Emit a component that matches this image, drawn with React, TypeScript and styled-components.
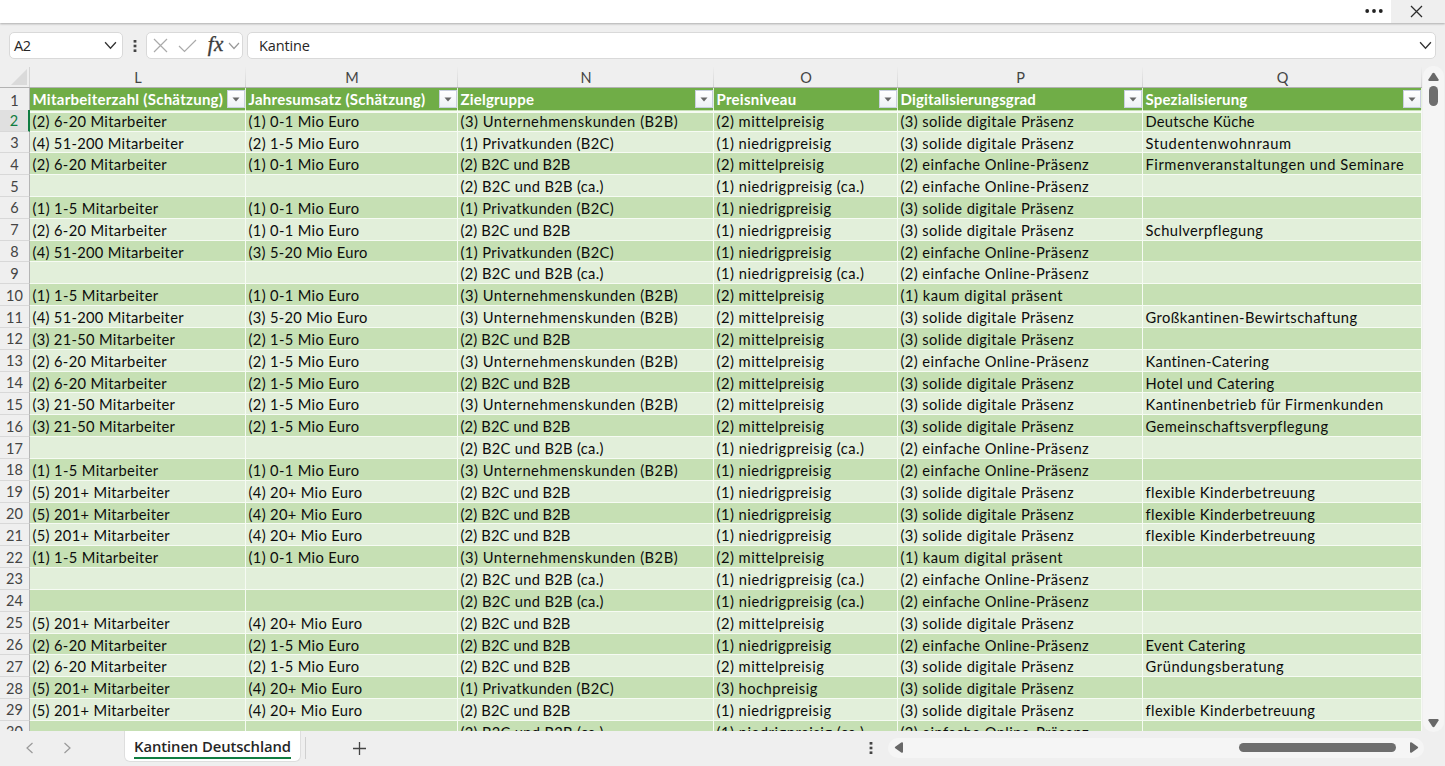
import React from "react";
import styled, { createGlobalStyle } from "styled-components";

const GlobalStyle = createGlobalStyle`
  * { box-sizing: border-box; }
  body { margin: 0; background: #efefef; overflow: hidden; }
`;

const uiFont = '"Open Sans", "Noto Sans", sans-serif';
const cellFont = 'Lato, "Open Sans", sans-serif';
const columnTemplate = "30px 216px 212px 256px 184px 245px 279px";

const Window = styled.div`
  width: 1445px;
  height: 766px;
  display: flex;
  flex-direction: column;
  background: #efefef;
  font-family: ${uiFont};
  color: #262626;
  overflow: hidden;
`;

const TitleBar = styled.div`
  height: 23px;
  flex: none;
  display: flex;
  justify-content: flex-end;
  background: #fff;
  box-shadow: 0 1px 2px rgba(0, 0, 0, 0.28);
`;

const TitleButton = styled.div<{ $width: number; $shaded?: boolean }>`
  width: ${(p) => p.$width}px;
  display: flex;
  align-items: center;
  justify-content: center;
  padding: ${(p) => (p.$shaded ? "0 3px 1px 0" : "0 0 2px")};
  background: ${(p) => (p.$shaded ? "#efefef" : "#fff")};
`;

const FormulaBar = styled.div`
  height: 44px;
  flex: none;
  display: flex;
  align-items: flex-start;
  padding: 9px 9px 0;
`;

const Field = styled.div<{ $width?: number; $pad?: string }>`
  height: 27px;
  ${(p) => (p.$width ? `width: ${p.$width}px; flex: none;` : "flex: 1;")}
  display: flex;
  align-items: center;
  justify-content: space-between;
  padding: ${(p) => p.$pad ?? "0 5px 0 4px"};
  background: #fff;
  border: 1px solid #d9d9d9;
  border-radius: 5px;
  font-size: 14.5px;
  line-height: 20px;
`;

const FieldText = styled.span<{ $spacing: number }>`
  letter-spacing: ${(p) => p.$spacing}px;
`;

const FieldDivider = styled.div<{ $width: number }>`
  width: ${(p) => p.$width}px;
  height: 27px;
  flex: none;
  display: flex;
  align-items: center;
  justify-content: center;
`;

const CheckMark = styled.svg`
  margin-left: 9px;
`;

const FxLabel = styled.span`
  font: italic 400 21px/20px "Liberation Serif", serif;
  letter-spacing: 0.3px;
  -webkit-text-stroke: 0.35px #3c3c3c;
  color: #3c3c3c;
  padding: 0 3px 4px 9px;
`;

const Workspace = styled.div`
  height: 664px;
  flex: none;
  display: flex;
`;

const Sheet = styled.div`
  width: 1422px;
  flex: none;
  overflow: hidden;
`;

const ColumnHeads = styled.div`
  height: 21px;
  display: grid;
  grid-template-columns: ${columnTemplate};
  border-bottom: 1px solid #b3b3b3;
`;

const ColumnHead = styled.div`
  display: flex;
  justify-content: center;
  align-items: center;
  padding: 1px 0 0 1px;
  font-family: ${cellFont};
  font-size: 14.5px;
  color: #444;
  border-right: 1px solid;
  border-image: linear-gradient(#efefef, #d2d2d2) 1;
`;

const SelectCorner = styled.div`
  display: flex;
  justify-content: flex-end;
  align-items: flex-end;
  padding: 0 2px 2px 0;
  border-right: 1px solid #d5d5d5;
`;

const Row = styled.div<{ $band: boolean }>`
  height: 21.83px;
  display: grid;
  grid-template-columns: ${columnTemplate};
  background: ${(p) => (p.$band ? "#c6e0b4" : "#e2efda")};
`;

const HeaderRow = styled(Row)`
  height: 21.7px;
  background: #70ad47;
`;

const RowNumber = styled.div<{ $active?: boolean; $top?: number }>`
  display: flex;
  align-items: center;
  justify-content: center;
  padding-top: ${(p) => p.$top ?? 1}px;
  background: ${(p) => (p.$active ? "#e0e0e0" : "#efefef")};
  border-right: ${(p) => (p.$active ? "2px solid #107c41" : "1px solid #b5b5b5")};
  border-bottom: 1px solid #d8d8d8;
  font-family: ${cellFont};
  font-size: 14.5px;
  color: ${(p) => (p.$active ? "#107c41" : "#444")};
`;

const Cell = styled.div<{ $spacing: number }>`
  padding-left: 2.5px;
  border-right: 1px solid #f6fbf3;
  border-bottom: 1px solid #f6fbf3;
  font-family: ${cellFont};
  font-size: 14.7px;
  line-height: 23px;
  letter-spacing: ${(p) => p.$spacing}px;
  white-space: pre;
  color: #0c0c0c;
  overflow: hidden;
`;

const HeaderCell = styled.div<{ $spacing: number }>`
  display: flex;
  justify-content: space-between;
  padding-left: 2.5px;
  border-right: 1px solid #e4f1dc;
  border-bottom: 2px solid #f6fbf3;
  font-family: ${cellFont};
  font-size: 15px;
  font-weight: 700;
  line-height: 23px;
  letter-spacing: ${(p) => p.$spacing}px;
  white-space: nowrap;
  color: #fff;
`;

const FilterButton = styled.div`
  width: 18px;
  height: 18px;
  flex: none;
  margin-top: 2px;
  display: flex;
  align-items: center;
  justify-content: center;
  background: linear-gradient(#fff, #eef1f7);
  border: 1px solid #c9cfdf;
`;

const VerticalBar = styled.div`
  width: 21px;
  height: 666px;
  margin: -1px 0 0 1px;
  display: flex;
  flex-direction: column;
  align-items: center;
  padding: 6px 0 4px;
  border-radius: 10px;
  background: #f5f5f5;
`;

const VerticalThumb = styled.div`
  width: 9px;
  height: 20px;
  margin: 5px 0 auto;
  border-radius: 5px;
  background: #6e6e6e;
`;

const Footer = styled.div`
  flex: 1;
  display: flex;
  align-items: flex-start;
`;

const FooterIcon = styled.div<{ $width: number }>`
  width: ${(p) => p.$width}px;
  height: 34px;
  flex: none;
  display: flex;
  align-items: center;
  justify-content: center;
`;

const SheetTab = styled.div`
  width: 177px;
  height: 31px;
  flex: none;
  display: flex;
  justify-content: center;
  background: #fff;
  border: 1px solid #dedede;
  border-top: 0;
  border-radius: 0 0 6px 6px;
`;

const SheetName = styled.span`
  height: 28px;
  border-bottom: 2px solid #107c41;
  font-size: 14.8px;
  font-weight: 600;
  line-height: 31px;
  letter-spacing: -0.08px;
  white-space: nowrap;
`;

const TabDivider = styled.div`
  width: 1px;
  height: 22px;
  margin: 6px 0 0 4px;
  background: #d0d0d0;
`;

const FooterSpace = styled.div`
  flex: 1;
`;

const HorizontalBar = styled.div`
  width: 536px;
  height: 20px;
  flex: none;
  display: flex;
  align-items: center;
  margin: 7px 21px 0 0;
  padding: 0 5px 1px 6px;
  border-radius: 10px;
  background: #f5f5f5;
`;

const HorizontalThumb = styled.div`
  width: 157px;
  height: 9px;
  margin: 0 14px 0 auto;
  border-radius: 5px;
  background: #6e6e6e;
`;

type ChevronProps = { dir: "down" | "left" | "right"; size: number; color: string };

const chevronPoints = { down: "1,3 6,8.5 11,3", left: "8.5,1 3,6 8.5,11", right: "3.5,1 9,6 3.5,11" };

const Chevron = ({ dir, size, color }: ChevronProps) => (
  <svg width={size} height={size} viewBox="0 0 12 12" fill="none" stroke={color} strokeWidth={1.2}>
    <polyline points={chevronPoints[dir]} />
  </svg>
);

const Dots = ({ vertical }: { vertical?: boolean }) =>
  vertical ? (
    <svg width="4" height="14" viewBox="0 0 4 14" fill="#444">
      <rect x="0.6" y="1" width="2.8" height="2.6" />
      <rect x="0.6" y="5.7" width="2.8" height="2.6" />
      <rect x="0.6" y="10.4" width="2.8" height="2.6" />
    </svg>
  ) : (
    <svg width="20" height="6" viewBox="0 0 20 6" fill="#222">
      <circle cx="3.2" cy="3" r="1.9" />
      <circle cx="10" cy="3" r="1.9" />
      <circle cx="16.8" cy="3" r="1.9" />
    </svg>
  );

const arrowPaths = {
  up: "M4.3 1.6Q5.5 0 6.7 1.6L10.6 7.4Q11 9 9.6 9H1.4Q0 9 0.4 7.4Z",
  down: "M4.3 7.4Q5.5 9 6.7 7.4L10.6 1.6Q11 0 9.6 0H1.4Q0 0 0.4 1.6Z",
  left: "M1.6 4.4Q0 5.5 1.6 6.6L7.2 10.6Q9 11.2 9 9.8V1.2Q9 -0.2 7.2 0.4Z",
  right: "M7.4 4.4Q9 5.5 7.4 6.6L1.8 10.6Q0 11.2 0 9.8V1.2Q0 -0.2 1.8 0.4Z",
};

const ScrollArrow = ({ dir }: { dir: keyof typeof arrowPaths }) => {
  const upright = dir === "up" || dir === "down";
  return (
    <svg width={upright ? 11 : 9} height={upright ? 9 : 11} fill="#686868">
      <path d={arrowPaths[dir]} />
    </svg>
  );
};

type Label = { text: string; spacing: number };
const label = (text: string, spacing = 0.3): Label => ({ text, spacing });

const columns = [
  { letter: "L", ...label("Mitarbeiterzahl (Schätzung)", 0.27) },
  { letter: "M", ...label("Jahresumsatz (Schätzung)", 0.27) },
  { letter: "N", ...label("Zielgruppe", 0.2) },
  { letter: "O", ...label("Preisniveau", 0.26) },
  { letter: "P", ...label("Digitalisierungsgrad", 0.15) },
  { letter: "Q", ...label("Spezialisierung", 0.17) },
];

const blank = label("");

const staff: Record<string, Label> = {
  "1": label("(1) 1-5 Mitarbeiter", 0.36),
  "2": label("(2) 6-20 Mitarbeiter", 0.34),
  "3": label("(3) 21-50 Mitarbeiter", 0.31),
  "4": label("(4) 51-200 Mitarbeiter", 0.3),
  "5": label("(5) 201+ Mitarbeiter", 0.34),
};
const revenue: Record<string, Label> = {
  "1": label("(1) 0-1 Mio Euro", 0.35),
  "2": label("(2) 1-5 Mio Euro", 0.35),
  "3": label("(3) 5-20 Mio Euro", 0.32),
  "4": label("(4) 20+ Mio Euro", 0.35),
};
const audience: Record<string, Label> = {
  "1": label("(1) Privatkunden (B2C)", 0.39),
  "2": label("(2) B2C und B2B", 0.16),
  "2c": label("(2) B2C und B2B (ca.)", 0.32),
  "3": label("(3) Unternehmenskunden (B2B)", 0.53),
};
const price: Record<string, Label> = {
  "1": label("(1) niedrigpreisig", 0.48),
  "1c": label("(1) niedrigpreisig (ca.)", 0.53),
  "2": label("(2) mittelpreisig", 0.49),
  "3": label("(3) hochpreisig", 0.49),
};
const digital: Record<string, Label> = {
  "1": label("(1) kaum digital präsent", 0.53),
  "2": label("(2) einfache Online-Präsenz", 0.43),
  "3": label("(3) solide digitale Präsenz", 0.42),
};
const specialities: Record<string, Label> = {
  kitchen: label("Deutsche Küche", 0.25),
  student: label("Studentenwohnraum", 0.65),
  events: label("Firmenveranstaltungen und Seminare", 0.55),
  school: label("Schulverpflegung", 0.4),
  large: label("Großkantinen-Bewirtschaftung", 0.44),
  canteen: label("Kantinen-Catering", 0.32),
  hotel: label("Hotel und Catering", 0.37),
  corporate: label("Kantinenbetrieb für Firmenkunden", 0.47),
  community: label("Gemeinschaftsverpflegung", 0.46),
  childcare: label("flexible Kinderbetreuung", 0.44),
  event: label("Event Catering", 0.34),
  startup: label("Gründungsberatung", 0.6),
};

const records: string[][] = [
  ["2", "1", "3", "2", "3", "kitchen"],
  ["4", "2", "1", "1", "3", "student"],
  ["2", "1", "2", "2", "2", "events"],
  ["", "", "2c", "1c", "2", ""],
  ["1", "1", "1", "1", "3", ""],
  ["2", "1", "2", "1", "3", "school"],
  ["4", "3", "1", "1", "2", ""],
  ["", "", "2c", "1c", "2", ""],
  ["1", "1", "3", "2", "1", ""],
  ["4", "3", "3", "2", "3", "large"],
  ["3", "2", "2", "2", "3", ""],
  ["2", "2", "3", "2", "2", "canteen"],
  ["2", "2", "2", "2", "3", "hotel"],
  ["3", "2", "3", "2", "3", "corporate"],
  ["3", "2", "2", "2", "3", "community"],
  ["", "", "2c", "1c", "2", ""],
  ["1", "1", "3", "1", "2", ""],
  ["5", "4", "2", "1", "3", "childcare"],
  ["5", "4", "2", "1", "3", "childcare"],
  ["5", "4", "2", "1", "3", "childcare"],
  ["1", "1", "3", "2", "1", ""],
  ["", "", "2c", "1c", "2", ""],
  ["", "", "2c", "1c", "2", ""],
  ["5", "4", "2", "2", "3", ""],
  ["2", "2", "2", "1", "2", "event"],
  ["2", "2", "2", "2", "3", "startup"],
  ["5", "4", "1", "3", "3", ""],
  ["5", "4", "2", "1", "3", "childcare"],
  ["", "", "2c", "1c", "2", ""],
];

const lookups = [staff, revenue, audience, price, digital, specialities];

export default function App() {
  return (
    <>
      <GlobalStyle />
      <Window>
        <TitleBar>
          <TitleButton $width={34}><Dots /></TitleButton>
          <TitleButton $width={54} $shaded>
            <svg width="13" height="13" viewBox="0 0 13 13" stroke="#2b2b2b" strokeWidth="1.25">
              <path d="M1 1L12 12M12 1L1 12" />
            </svg>
          </TitleButton>
        </TitleBar>

        <FormulaBar>
          <Field $width={114}>
            <FieldText $spacing={-0.3}>A2</FieldText>
            <Chevron dir="down" size={13} color="#333" />
          </Field>
          <FieldDivider $width={23}><Dots vertical /></FieldDivider>
          <Field $width={97} $pad="0 2px 0 6px">
            <svg width="15" height="15" viewBox="0 0 15 15" stroke="#aaa" strokeWidth="1.2">
              <path d="M1 1L14 14M14 1L1 14" />
            </svg>
            <CheckMark width="19" height="14" viewBox="0 0 19 14" fill="none" stroke="#aaa" strokeWidth="1.2">
              <path d="M1 7L6.5 12.5L18 1" />
            </CheckMark>
            <FxLabel>fx</FxLabel>
            <Chevron dir="down" size={12} color="#999" />
          </Field>
          <FieldDivider $width={4} />
          <Field $pad="0 3px 0 11px">
            <FieldText $spacing={-0.15}>Kantine</FieldText>
            <Chevron dir="down" size={13} color="#333" />
          </Field>
        </FormulaBar>

        <Workspace>
          <Sheet>
            <ColumnHeads>
              <SelectCorner>
                <svg width="16" height="16"><path d="M16 0V16H0Z" fill="#dadada" /></svg>
              </SelectCorner>
              {columns.map((c) => <ColumnHead key={c.letter}>{c.letter}</ColumnHead>)}
            </ColumnHeads>
            <HeaderRow $band={false}>
              <RowNumber $top={0}>1</RowNumber>
              {columns.map((c) => (
                <HeaderCell key={c.letter} $spacing={c.spacing}>
                  {c.text}
                  <FilterButton>
                    <svg width="8" height="5"><path d="M0.5 0.5H7.5L4 4.5Z" fill="#666" /></svg>
                  </FilterButton>
                </HeaderCell>
              ))}
            </HeaderRow>
            {records.map((record, index) => (
              <Row key={index} $band={index % 2 === 0}>
                <RowNumber $active={index === 0}>{index + 2}</RowNumber>
                {record.map((key, i) => {
                  const { text, spacing } = lookups[i][key] ?? blank;
                  return <Cell key={i} $spacing={spacing}>{text}</Cell>;
                })}
              </Row>
            ))}
          </Sheet>
          <VerticalBar>
            <ScrollArrow dir="up" />
            <VerticalThumb />
            <ScrollArrow dir="down" />
          </VerticalBar>
        </Workspace>

        <Footer>
          <FooterIcon $width={60}><Chevron dir="left" size={12} color="#999" /></FooterIcon>
          <FooterIcon $width={14}><Chevron dir="right" size={12} color="#999" /></FooterIcon>
          <FooterIcon $width={50} />
          <SheetTab><SheetName>Kantinen Deutschland</SheetName></SheetTab>
          <TabDivider />
          <FooterIcon $width={106}>
            <svg width="13" height="13" stroke="#444" strokeWidth="1.3"><path d="M6.5 0V13M0 6.5H13" /></svg>
          </FooterIcon>
          <FooterSpace />
          <FooterIcon $width={34}><Dots vertical /></FooterIcon>
          <HorizontalBar>
            <ScrollArrow dir="left" />
            <HorizontalThumb />
            <ScrollArrow dir="right" />
          </HorizontalBar>
        </Footer>
      </Window>
    </>
  );
}
